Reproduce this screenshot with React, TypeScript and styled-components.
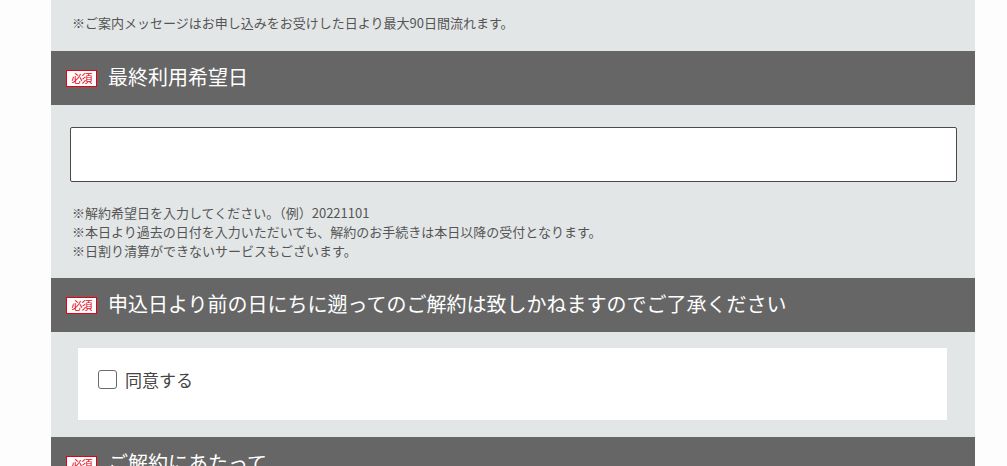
import { createGlobalStyle, styled } from "styled-components";

const GlobalStyle = createGlobalStyle`
  html, body {
    margin: 0;
    padding: 0;
    background: #fdfdfd;
    font-family: "Noto Sans CJK JP", "Noto Sans", sans-serif;
  }
`;

const App = () => {
  return (
    <>
      <GlobalStyle />
      <Page>
        <FormColumn>
          <TopNote>
            ※ご案内メッセージはお申し込みをお受けした日より最大90日間流れます。
          </TopNote>

          <SectionHeader>
            <RequiredBadge>必須</RequiredBadge>
            <SectionTitle>最終利用希望日</SectionTitle>
          </SectionHeader>
          <SectionBody>
            <DateInput type="text" />
            <Notes>
              <li>※解約希望日を入力してください。（例）20221101</li>
              <li>
                ※本日より過去の日付を入力いただいても、解約のお手続きは本日以降の受付となります。
              </li>
              <li>※日割り清算ができないサービスもございます。</li>
            </Notes>
          </SectionBody>

          <SectionHeader>
            <RequiredBadge>必須</RequiredBadge>
            <SectionTitle>
              申込日より前の日にちに遡ってのご解約は致しかねますのでご了承ください
            </SectionTitle>
          </SectionHeader>
          <SectionBody $tight>
            <AgreeBox>
              <AgreeLabel>
                <CheckBox type="checkbox" />
                同意する
              </AgreeLabel>
            </AgreeBox>
          </SectionBody>

          <SectionHeader>
            <RequiredBadge>必須</RequiredBadge>
            <SectionTitle>ご解約にあたって</SectionTitle>
          </SectionHeader>
        </FormColumn>
      </Page>
    </>
  );
};

export default App;

const Page = styled.div`
  height: 466px;
  overflow: hidden;
  padding-left: 51px;
`;
const FormColumn = styled.div`
  width: 924px;
  background: #e3e6e7;
  min-height: 100%;
`;
const TopNote = styled.p`
  margin: 0;
  padding: 13px 21px 19px;
  font-size: 13px;
  line-height: 19px;
  color: #555;
`;
const SectionHeader = styled.div`
  display: flex;
  align-items: center;
  gap: 11px;
  height: 54px;
  padding-left: 15px;
  background: #666666;
`;
const RequiredBadge = styled.span`
  display: flex;
  align-items: center;
  justify-content: center;
  box-sizing: border-box;
  width: 31px;
  height: 17px;
  border: 1px solid #e60012;
  background: #fff;
  color: #e60012;
  font-size: 11px;
  line-height: 1;
  letter-spacing: -1px;
`;
const SectionTitle = styled.h2`
  margin: 0;
  font-size: 20px;
  font-weight: 400;
  color: #fff;
  line-height: 1;
  margin-top: -2px;
`;
const SectionBody = styled.div<{ $tight?: boolean }>`
  padding: ${(p) => (p.$tight ? "16px 28px 17px 27px" : "22px 18px 18px 19px")};
`;
const DateInput = styled.input`
  display: block;
  box-sizing: border-box;
  width: 100%;
  height: 55px;
  border: 1px solid #4a4a4a;
  border-radius: 2px;
  background: #fff;
  font-size: 16px;
  padding: 0 12px;
`;
const Notes = styled.ul`
  list-style: none;
  margin: 21px 0 0;
  padding: 0 0 0 2px;
  font-size: 13px;
  line-height: 19px;
  color: #555;
`;
const AgreeBox = styled.div`
  box-sizing: border-box;
  height: 72px;
  background: #fff;
  padding: 21px 20px;
`;
const AgreeLabel = styled.label`
  display: flex;
  align-items: center;
  gap: 8px;
  font-size: 17px;
  line-height: 21px;
  color: #444;
`;
const CheckBox = styled.input`
  appearance: none;
  margin: 0;
  width: 19px;
  height: 19px;
  box-sizing: border-box;
  border: 1px solid #6a6a6a;
  border-radius: 3px;
  background: #fff;
`;
